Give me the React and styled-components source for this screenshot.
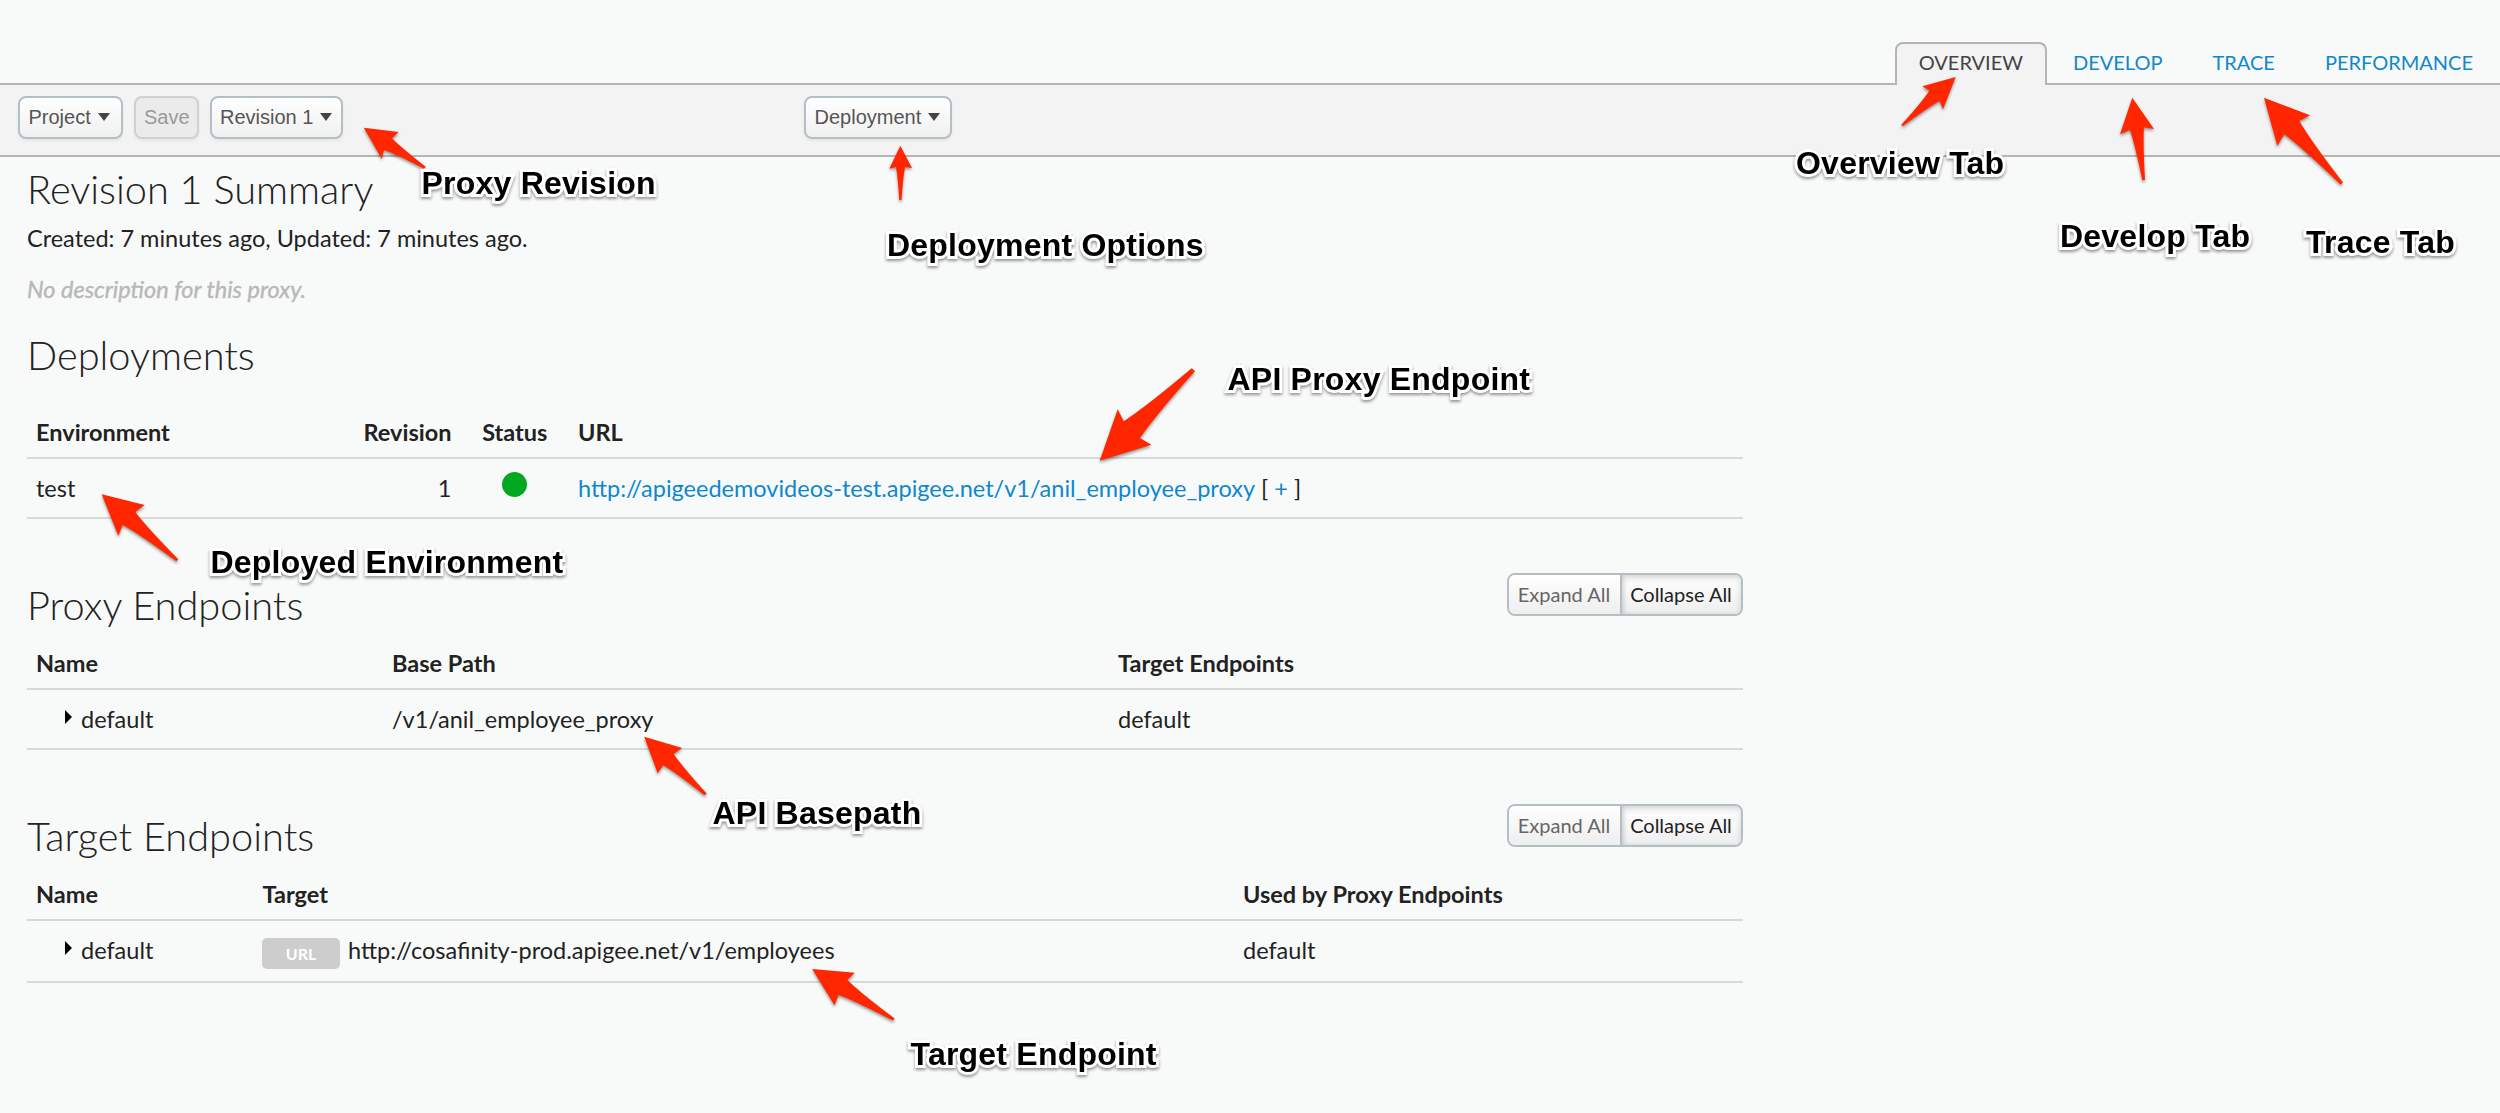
import React from 'react';
import styled, { createGlobalStyle, css } from 'styled-components';

const GlobalStyle = createGlobalStyle`
  *, *::before, *::after { box-sizing: border-box; }
  body {
    margin: 0;
    background: #f8faf9;
    color: #222;
    font-family: Lato, 'Liberation Sans', sans-serif;
    font-size: 23.5px;
    line-height: 30px;
  }
`;

const LINE = '#b5b5b5';
const RULE = '#d6d9d9';
const LINK = '#0f87cf';

const Page = styled.div`
  position: relative;
  width: 2500px;
  height: 1113px;
  overflow: hidden;
`;

/* ---------- tabs ---------- */

const TabBar = styled.nav`
  display: flex;
  justify-content: flex-end;
  align-items: flex-end;
  gap: 2px;
  height: 85px;
  padding-right: 3px;
  border-bottom: 2px solid ${LINE};
`;

const Tab = styled.a`
  height: 43px;
  margin-bottom: -2px;
  padding: 0 22px;
  border: 2px solid transparent;
  border-bottom: 0;
  border-radius: 8px 8px 0 0;
  font-size: 20px;
  line-height: 37px;
  color: ${LINK};
  ${({ $active }) =>
    $active &&
    css`
      color: #444;
      background: #f3f3f3;
      border-color: ${LINE};
    `}
`;

/* ---------- toolbar ---------- */

const Toolbar = styled.div`
  display: flex;
  align-items: flex-start;
  height: 72px;
  padding: 11px 18px 0;
  background: #f3f3f3;
  border-bottom: 2px solid ${LINE};
`;

const ToolGroup = styled.div`
  display: flex;
  gap: 11px;
  width: ${({ $width }) => $width}px;
`;

const ToolButton = styled.button`
  display: flex;
  align-items: center;
  gap: 7px;
  width: ${({ $width }) => $width}px;
  height: 43px;
  padding: 0 0 0 8.5px;
  border: 2px solid #b4bfc5;
  border-radius: 8px;
  background: linear-gradient(#fff, #f0f0f0);
  box-shadow: 0 2px 3px rgba(0, 0, 0, 0.06);
  color: #555;
  font: 20px 'Liberation Sans', Arial, sans-serif;
  white-space: nowrap;
  &:disabled {
    background: #ebebeb;
    border-color: #cbd2d5;
    color: #999;
  }
`;

const Caret = styled.span`
  border: 6.5px solid transparent;
  border-top: 8px solid #444;
  border-bottom: 0;
  margin-top: -2px;
`;

/* ---------- content ---------- */

const Content = styled.main`
  width: 1743px;
  padding: 7px 0 0 27px;
`;

const Title = styled.h2`
  margin: 0;
  font-size: 39.75px;
  font-weight: 300;
  line-height: 50px;
  color: #222;
`;

const Meta = styled.p`
  margin: 9px 0 0;
`;

const Description = styled.p`
  margin: 21px 0 26px;
  font-style: italic;
  color: #b8b8b8;
  -webkit-text-stroke: 0.4px #b8b8b8;
`;

const SectionHead = styled.header`
  display: flex;
  justify-content: space-between;
  align-items: flex-start;
  height: 64px;
  margin-top: ${({ $top }) => $top}px;
  ${Title} { padding-top: 7px; }
`;

const ToggleGroup = styled.div`
  display: flex;
  width: 236px;
  height: 43px;
  border: 2px solid #b4bfc5;
  border-radius: 8px;
  overflow: hidden;
`;

const Toggle = styled.button`
  flex: ${({ $pressed }) => ($pressed ? '1' : '0 0 111px')};
  padding: 0 1px 1px 0;
  border: 0;
  background: linear-gradient(#fff, #eee);
  color: #666;
  font: 20px Lato, sans-serif;
  white-space: nowrap;
  ${({ $pressed }) =>
    $pressed &&
    css`
      border-left: 2px solid #b4bfc5;
      color: #222;
      box-shadow: inset 0 3px 6px rgba(0, 0, 0, 0.14), inset 2px 0 4px rgba(0, 0, 0, 0.08);
    `}
`;

const Table = styled.div`
  margin-top: ${({ $top = 0 }) => $top}px;
`;

const Row = styled.div`
  display: grid;
  grid-template-columns: ${({ $cols }) => $cols};
  align-items: center;
  height: ${({ $height = 60 }) => $height}px;
  border-bottom: 2px solid ${RULE};
`;

const HeadRow = styled(Row)`
  font-weight: 700;
`;

const Cell = styled.div`
  display: flex;
  align-items: center;
  justify-content: ${({ $align = 'flex-start' }) => $align};
  padding: 0 8.5px 0 9px;
  padding-bottom: ${({ $lift = 0 }) => $lift}px;
  white-space: pre;
`;

const Dot = styled.span`
  width: 25px;
  height: 25px;
  margin-bottom: 8px;
  border-radius: 50%;
  background: #02a820;
`;

const Link = styled.a`
  color: ${LINK};
`;

const Disclosure = styled.span`
  margin: 0 9px 4px 29px;
  border: 7.5px solid transparent;
  border-left: 7.5px solid #000;
  border-right: 0;
`;

const Badge = styled.span`
  width: 78px;
  height: 31px;
  margin: 6px 8px 0 -0.5px;
  border-radius: 5px;
  background: #cdcdcd;
  color: #fff;
  font-size: 16px;
  font-weight: 700;
  line-height: 31px;
  text-align: center;
`;

/* ---------- annotations ---------- */

const ArrowLayer = styled.svg`
  position: absolute;
  inset: 0;
  fill: #ff2600;
  pointer-events: none;
  path { filter: drop-shadow(0 2px 1.5px rgba(0, 0, 0, 0.4)); }
`;

const Callout = styled.div`
  position: absolute;
  left: ${({ $x }) => $x}px;
  top: ${({ $y }) => $y}px;
  font: 700 32px/40px 'Liberation Sans', Arial, sans-serif;
  letter-spacing: 0.22px;
  color: #000;
  white-space: nowrap;
  -webkit-text-stroke: 6px #fff;
  paint-order: stroke fill;
  stroke-linejoin: round;
  filter: drop-shadow(0 2px 1.5px rgba(0, 0, 0, 0.4));
`;

// Each arrow: tip, barb, neck, tail, tail, neck, barb
const arrows = [
  [[363.8, 127.7], [398.7, 132], [392, 138.3], [426, 167], [423.5, 168.5], [384, 150], [381.7, 158.7]],
  [[900.3, 145.7], [912, 168], [905, 167], [901.5, 200], [899.3, 200], [896, 167], [889.3, 168.7]],
  [[1955.7, 77], [1943, 109.3], [1939.7, 101], [1902.7, 126.3], [1901.3, 124.7], [1929.3, 90.7], [1922.3, 86.3]],
  [[2132.3, 97.7], [2154, 129], [2144, 127.3], [2145, 180], [2142.3, 180.3], [2130, 130], [2120, 134.3]],
  [[2264, 97.7], [2310, 115.3], [2299.3, 121], [2343, 182.5], [2340.5, 184.5], [2284.3, 134.3], [2277.3, 145.7]],
  [[101.7, 494.3], [144.7, 505], [135.3, 512], [178.3, 559.3], [176.3, 561.3], [122.7, 525], [118.3, 535.7]],
  [[1099.7, 460.7], [1151.3, 444.7], [1140, 438], [1195, 371], [1191.7, 368.3], [1123.7, 421.3], [1117.7, 409.3]],
  [[644.2, 736.7], [682.2, 748], [673.6, 754], [706.7, 793.5], [704.4, 795.3], [663.2, 765.3], [657.7, 773.3]],
  [[812.2, 969], [854.8, 972.7], [847.4, 980], [894.7, 1018.5], [892.7, 1020.5], [838.6, 995], [834.5, 1005.3]],
];

const lerp = (a, b, t) => [a[0] + (b[0] - a[0]) * t, a[1] + (b[1] - a[1]) * t];

// Control point for the tapering side, pulled in toward the arrow's axis
const bend = (neck, tail, tip) => {
  const p = lerp(neck, tail, 0.3);
  const d = [tail[0] - tip[0], tail[1] - tip[1]];
  const t = ((p[0] - tip[0]) * d[0] + (p[1] - tip[1]) * d[1]) / (d[0] ** 2 + d[1] ** 2);
  return lerp(p, lerp(tip, tail, t), 0.3);
};

const arrowPath = ([tip, b1, n1, t1, t2, n2, b2]) =>
  `M${tip} L${b1} L${n1} Q${bend(n1, t1, tip)} ${t1} L${t2} Q${bend(n2, t2, tip)} ${n2} L${b2} Z`;

const callouts = [
  ['Proxy Revision', 421.5, 163],
  ['Deployment Options', 887, 225],
  ['Overview Tab', 1796, 143],
  ['Develop Tab', 2060, 216],
  ['Trace Tab', 2306, 222],
  ['API Proxy Endpoint', 1227.5, 359],
  ['Deployed Environment', 210.5, 542],
  ['API Basepath', 712.5, 793],
  ['Target Endpoint', 910.5, 1034],
];

const DEPLOY_COLS = '253px 180px 109px 1fr';
const PROXY_COLS = '356px 726px 1fr';
const TARGET_COLS = '226.5px 980.5px 1fr';

const ExpandToggle = () => (
  <ToggleGroup>
    <Toggle>Expand All</Toggle>
    <Toggle $pressed>Collapse All</Toggle>
  </ToggleGroup>
);

export default function App() {
  return (
    <Page>
      <GlobalStyle />
      <TabBar>
        <Tab $active>OVERVIEW</Tab>
        <Tab>DEVELOP</Tab>
        <Tab>TRACE</Tab>
        <Tab>PERFORMANCE</Tab>
      </TabBar>
      <Toolbar>
        <ToolGroup $width={786}>
          <ToolButton $width={104.5}>Project<Caret /></ToolButton>
          <ToolButton $width={65} disabled>Save</ToolButton>
          <ToolButton $width={133}>Revision 1<Caret /></ToolButton>
        </ToolGroup>
        <ToolButton $width={148}>Deployment<Caret /></ToolButton>
      </Toolbar>

      <Content>
        <Title>Revision 1 Summary</Title>
        <Meta>Created: 7 minutes ago, Updated: 7 minutes ago.</Meta>
        <Description>No description for this proxy.</Description>

        <Title>Deployments</Title>
        <Table $top={26}>
          <HeadRow $cols={DEPLOY_COLS} $height={53}>
            <Cell>Environment</Cell>
            <Cell $align="flex-end">Revision</Cell>
            <Cell $align="center">Status</Cell>
            <Cell>URL</Cell>
          </HeadRow>
          <Row $cols={DEPLOY_COLS}>
            <Cell>test</Cell>
            <Cell $align="flex-end">1</Cell>
            <Cell $align="center"><Dot /></Cell>
            <Cell>
              <Link>http://apigeedemovideos-test.apigee.net/v1/anil_employee_proxy</Link>
              {' [ '}<Link>+</Link>{' ]'}
            </Cell>
          </Row>
        </Table>

        <SectionHead $top={54}>
          <Title>Proxy Endpoints</Title>
          <ExpandToggle />
        </SectionHead>
        <Table>
          <HeadRow $cols={PROXY_COLS} $height={53}>
            <Cell>Name</Cell>
            <Cell>Base Path</Cell>
            <Cell>Target Endpoints</Cell>
          </HeadRow>
          <Row $cols={PROXY_COLS}>
            <Cell><Disclosure />default</Cell>
            <Cell>/v1/anil_employee_proxy</Cell>
            <Cell>default</Cell>
          </Row>
        </Table>

        <SectionHead $top={54}>
          <Title>Target Endpoints</Title>
          <ExpandToggle />
        </SectionHead>
        <Table>
          <HeadRow $cols={TARGET_COLS} $height={53}>
            <Cell>Name</Cell>
            <Cell>Target</Cell>
            <Cell>Used by Proxy Endpoints</Cell>
          </HeadRow>
          <Row $cols={TARGET_COLS} $height={62}>
            <Cell $lift={2}><Disclosure />default</Cell>
            <Cell $lift={2}><Badge>URL</Badge>http://cosafinity-prod.apigee.net/v1/employees</Cell>
            <Cell $lift={2}>default</Cell>
          </Row>
        </Table>
      </Content>

      <ArrowLayer width="2500" height="1113" viewBox="0 0 2500 1113" aria-hidden="true">
        {arrows.map((points, i) => <path key={i} d={arrowPath(points)} />)}
      </ArrowLayer>
      {callouts.map(([text, x, y]) => <Callout key={text} $x={x} $y={y}>{text}</Callout>)}
    </Page>
  );
}
